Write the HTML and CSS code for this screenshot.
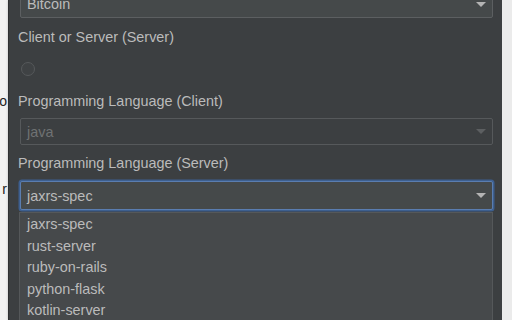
FILE: index.html
```html
<!DOCTYPE html>
<html>
<head>
<meta charset="utf-8">
<link rel="stylesheet" href="styles.css">
</head>
<body>
<div class="backdrop-left">
  <div class="peek peek-a">o</div>
  <div class="peek peek-b">r</div>
</div>
<div class="panel">
  <div class="form">
    <div class="combo combo-first">
      <span class="value">Bitcoin</span>
      <span class="arrow"></span>
    </div>
    <div class="label label-first">Client or Server (Server)</div>
    <div class="radio"></div>
    <div class="label label-second">Programming Language (Client)</div>
    <div class="combo combo-disabled">
      <span class="value">java</span>
      <span class="arrow"></span>
    </div>
    <div class="label label-third">Programming Language (Server)</div>
    <div class="combo combo-focused">
      <span class="value">jaxrs-spec</span>
      <span class="arrow"></span>
    </div>
    <ul class="list">
      <li>jaxrs-spec</li>
      <li>rust-server</li>
      <li>ruby-on-rails</li>
      <li>python-flask</li>
      <li>kotlin-server</li>
    </ul>
  </div>
</div>
<div class="backdrop-right"></div>
</body>
</html>
```
FILE: styles.css
```css
html, body {
  margin: 0;
  padding: 0;
}
body {
  width: 512px;
  height: 320px;
  overflow: hidden;
  display: flex;
  background: #e8e8e8;
  font-family: "Liberation Sans", Arial, sans-serif;
  font-size: 14.4px;
}
.backdrop-left {
  flex: 0 0 8px;
  background: #f2f2f2;
  display: flex;
  flex-direction: column;
  overflow: hidden;
}
.peek {
  display: flex;
  justify-content: flex-end;
  white-space: nowrap;
  color: #1e1e1e;
  font-size: 14px;
  line-height: 20px;
  padding-right: 1px;
}
.peek-a { margin-top: 91px; }
.peek-b { margin-top: 68px; }
.panel {
  flex: 0 0 494px;
  background: #3c3f41;
  border-left: 1px solid #2f3133;
  box-sizing: border-box;
  box-shadow: 1px 0 3px rgba(0,0,0,0.45);
  overflow: hidden;
}
.backdrop-right {
  flex: 1;
  background: #ebebeb;
}
.form {
  margin-top: -10px;
  padding: 0 9px 0 9px;
  display: flex;
  flex-direction: column;
}
.combo {
  margin-left: 2px;
  height: 28px;
  box-sizing: border-box;
  border: 1px solid #5c5f61;
  border-radius: 2px;
  background: #45494a;
  display: flex;
  align-items: center;
  padding: 0 6px 0 6px;
  color: #bbbbbb;
}
.combo .value {
  flex: 1;
}
.arrow {
  width: 0;
  height: 0;
  border-left: 5px solid transparent;
  border-right: 5px solid transparent;
  border-top: 5px solid #b4b4b4;
}
.combo-disabled {
  background: #3c3f41;
  border-color: #56595b;
  height: 27px;
  margin-top: 7px;
}
.combo-disabled .value { color: #6f7273; }
.combo-disabled .arrow { border-top-color: #5c5f61; }
.label {
  color: #bbbbbb;
  line-height: 20px;
}
.label-first { margin-top: 9px; }
.label-second { margin-top: 15px; }
.label-third { margin-top: 8px; }
.radio {
  margin-left: 3px;
  margin-top: 15px;
  width: 14px;
  height: 14px;
  box-sizing: border-box;
  border-radius: 50%;
  border: 1px solid #56595b;
  background: #3f4244;
}
.combo-focused {
  margin-top: 8px;
  height: 29px;
  border-color: #5a7db0;
  box-shadow: 0 0 0 1.5px #3d5f8f;
}
.list {
  list-style: none;
  margin: 2px 0 0 1px;
  padding: 1px 0 20px 0;
  background: #46494b;
  border: 1px solid #55585a;
  color: #bbbbbb;
}
.list li {
  line-height: 21.5px;
  padding-left: 7px;
}
```
